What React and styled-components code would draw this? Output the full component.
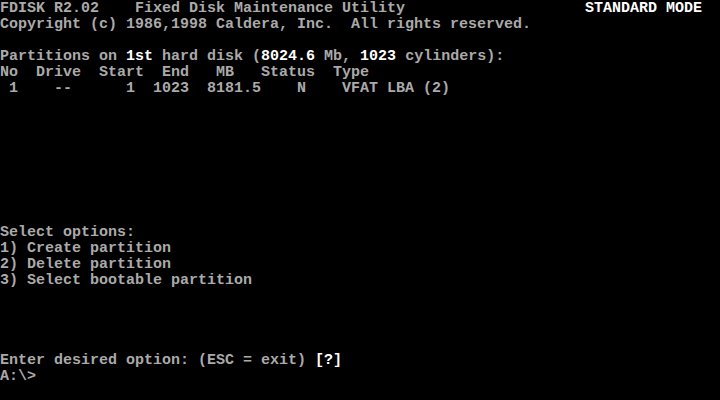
import styled, { createGlobalStyle } from 'styled-components';

const Global = createGlobalStyle`
  html, body {
    margin: 0;
    padding: 0;
    background: #000;
  }
`;

const Screen = styled.div`
  box-sizing: border-box;
  width: 720px;
  height: 400px;
  padding-top: 1px;
  background: #000;
  color: #aaaaaa;
  font-family: "Liberation Mono", "DejaVu Sans Mono", monospace;
  font-size: 15px;
  font-weight: bold;
  display: flex;
  flex-direction: column;
  overflow: hidden;
`;

const Line = styled.div`
  flex: none;
  height: 16px;
  line-height: 16px;
  white-space: pre;
`;

const Hi = styled.span`
  color: #ffffff;
`;

const Header = styled(Line)`
  display: flex;
  justify-content: space-between;
  padding-right: 18px;
`;

const rows = [
  ' 1    --      1  1023  8181.5    N    VFAT LBA (2)',
];

export default function App() {
  const blank = (n) => Array.from({ length: n }, (_, i) => <Line key={i}> </Line>);
  return (
    <Screen>
      <Global />
      <Header>
        <span>FDISK R2.02    Fixed Disk Maintenance Utility</span>
        <Hi>STANDARD MODE</Hi>
      </Header>
      <Line>Copyright (c) 1986,1998 Caldera, Inc.  All rights reserved.</Line>
      <Line> </Line>
      <Line>
        Partitions on <Hi>1st</Hi> hard disk (<Hi>8024.6</Hi> Mb, <Hi>1023</Hi> cylinders):
      </Line>
      <Line>No  Drive  Start  End   MB   Status  Type</Line>
      {rows.map((r) => (
        <Line key={r}>{r}</Line>
      ))}
      {blank(8)}
      <Line>Select options:</Line>
      <Line>1) Create partition</Line>
      <Line>2) Delete partition</Line>
      <Line>3) Select bootable partition</Line>
      {blank(4)}
      <Line>
        Enter desired option: (ESC = exit) <Hi>[?]</Hi>
      </Line>
      <Line>A:\&gt;</Line>
    </Screen>
  );
}
